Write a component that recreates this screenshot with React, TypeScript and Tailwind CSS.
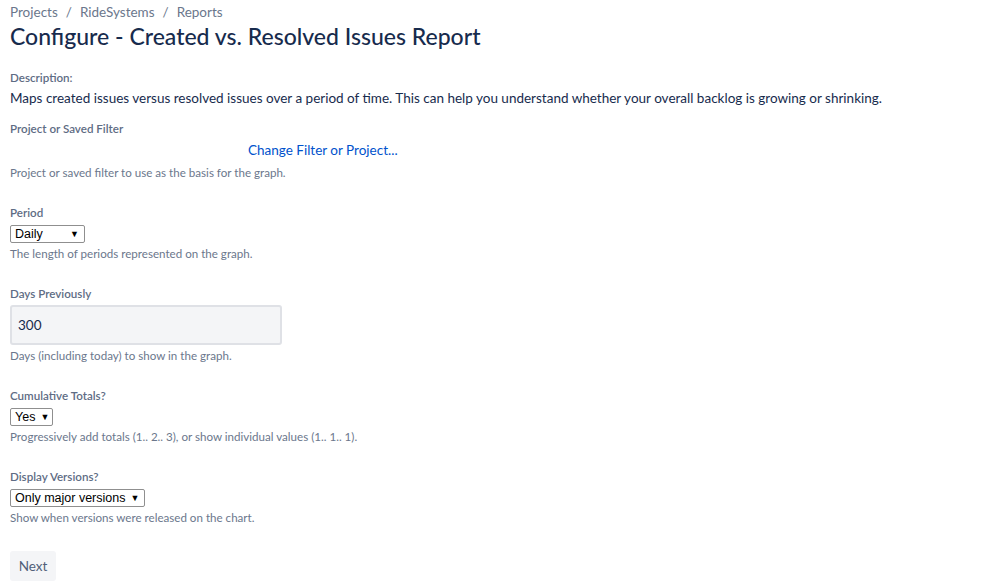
import React from 'react';

const FakeSelect: React.FC<{ value: string; width: string }> = ({ value, width }) => (
  <div
    className={`flex items-center justify-between gap-[5px] h-[18px] ${width} border border-[#8f8f8f] rounded-[2px] bg-white pl-[4px] pr-[5px] text-[12.5px] leading-none text-black whitespace-nowrap`}
    style={{ fontFamily: '"Liberation Sans", Arial, sans-serif' }}
  >
    <span>{value}</span>
    <span className="text-[9px]">▼</span>
  </div>
);

const Field: React.FC<{ label: string; help: string; children?: React.ReactNode }> = ({ label, help, children }) => (
  <div className="mb-[24px]">
    <div className="text-[11.6px] font-semibold text-[#5e6c84] leading-[16px] mb-[4px]">{label}</div>
    {children}
    <div className="text-[11.6px] text-[#6b778c] leading-[16px] mt-[3px]">{help}</div>
  </div>
);

export default function App() {
  return (
    <div className="min-h-screen bg-white px-[10px] pt-[2px]" style={{ fontFamily: 'Lato, "Noto Sans", sans-serif' }}>
      <nav className="text-[13.5px] leading-[20px] text-[#6b778c] flex gap-[8px]">
        <span>Projects</span>
        <span>/</span>
        <span>RideSystems</span>
        <span>/</span>
        <span>Reports</span>
      </nav>
      <h1 className="text-[23px] leading-[28px] font-medium text-[#172b4d]">
        Configure - Created vs. Resolved Issues Report
      </h1>

      <div className="mt-[20px] mb-[13px]">
        <div className="text-[11.6px] font-semibold text-[#5e6c84] leading-[16px] mb-[2px]">Description:</div>
        <div className="text-[13.5px] leading-[20px] text-[#172b4d]">
          Maps created issues versus resolved issues over a period of time. This can help you understand whether your overall backlog is growing or shrinking.
        </div>
      </div>

      <div className="mb-[24px]">
        <div className="text-[11.6px] font-semibold text-[#5e6c84] leading-[16px]">Project or Saved Filter</div>
        <div className="pl-[238px] mt-[3px] text-[13.5px] leading-[20px]">
          <a href="#" className="text-[#0052cc]">Change Filter or Project...</a>
        </div>
        <div className="text-[11.6px] text-[#6b778c] leading-[16px] mt-[5px]">Project or saved filter to use as the basis for the graph.</div>
      </div>

      <Field label="Period" help="The length of periods represented on the graph.">
        <FakeSelect value="Daily" width="w-[75px]" />
      </Field>

      <div className="mb-[24px]">
        <div className="text-[11.6px] font-semibold text-[#5e6c84] leading-[16px] mb-[3px]">Days Previously</div>
        <div className="w-[272px] h-[40px] bg-[#f4f5f7] border-2 border-[#dfe1e6] rounded-[3px] flex items-center px-[6px] text-[13.5px] text-[#172b4d]">
          300
        </div>
        <div className="text-[11.6px] text-[#6b778c] leading-[16px] mt-[3px]">Days (including today) to show in the graph.</div>
      </div>

      <Field label="Cumulative Totals?" help="Progressively add totals (1.. 2.. 3), or show individual values (1.. 1.. 1).">
        <FakeSelect value="Yes" width="w-[43px]" />
      </Field>

      <Field label="Display Versions?" help="Show when versions were released on the chart.">
        <FakeSelect value="Only major versions" width="w-[135px]" />
      </Field>

      <button className="mt-[1px] h-[30px] w-[46px] rounded-[3px] bg-[#f4f5f7] text-[13.5px] text-[#505f79]">Next</button>
    </div>
  );
}
